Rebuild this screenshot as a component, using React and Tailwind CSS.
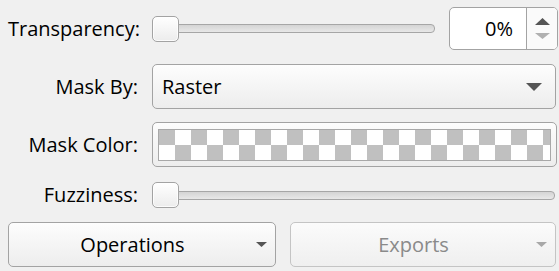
const font = { fontFamily: '"Open Sans", "Noto Sans", Arial, sans-serif' };

function Handle() {
  return (
    <div className="h-[26px] w-[27px] shrink-0 rounded-[5px] border border-[#a3a3a3] bg-linear-to-b from-white to-[#ececec] shadow-[inset_0_0_0_1px_rgba(255,255,255,0.8)]" />
  );
}

function Slider() {
  return (
    <div className="flex h-[26px] flex-1 items-center">
      <Handle />
      <div className="-ml-px h-[9px] flex-1 rounded-r-[4px] border border-[#a6a6a6] bg-linear-to-b from-[#d4d4d4] to-[#e8e8e8]" />
    </div>
  );
}

function Arrow({ w, h, color }) {
  return (
    <svg width={w} height={h} viewBox={`0 0 ${w} ${h}`} className="shrink-0">
      <polygon points={`0,0 ${w},0 ${w / 2},${h}`} fill={color} />
    </svg>
  );
}

function Label({ children }) {
  return <div className="w-[130px] shrink-0 text-right text-[20px] text-black">{children}</div>;
}

export default function App() {
  return (
    <div style={font} className="h-[271px] w-[559px] overflow-hidden bg-[#f0f0f0] pt-[7px] text-black">
      <div className="flex h-[43px] items-center gap-[14px] pl-[8px] pr-[1px]">
        <Label>Transparency:</Label>
        <Slider />
        <div className="flex h-[43px] w-[109px] shrink-0 overflow-hidden rounded-[5px] border border-[#a3a3a3] bg-white">
          <div className="flex flex-1 items-center justify-end pr-[13px] text-[20px]">0%</div>
          <div className="flex w-[31px] flex-col items-center justify-center gap-[8px] border-l border-[#a3a3a3] bg-[#fafafa]">
            <svg width="15" height="7" viewBox="0 0 15 7">
              <polygon points="0,7 15,7 7.5,0" fill="#555" />
            </svg>
            <Arrow w={15} h={6} color="#b0b0b0" />
          </div>
        </div>
      </div>

      <div className="mt-[14px] flex h-[45px] items-center gap-[14px] pl-[8px] pr-[3px]">
        <Label>Mask By:</Label>
        <div className="flex h-[45px] flex-1 items-center rounded-[5px] border border-[#a3a3a3] bg-linear-to-b from-[#fdfdfd] to-[#ededed] pl-[9px] pr-[13px]">
          <span className="flex-1 text-[20px]">Raster</span>
          <Arrow w={16} h={8} color="#555" />
        </div>
      </div>

      <div className="mt-[13px] flex h-[45px] items-center gap-[14px] pl-[8px] pr-[2px]">
        <Label>Mask Color:</Label>
        <div className="flex h-[45px] flex-1 items-center rounded-[5px] border border-[#a3a3a3] bg-linear-to-b from-[#fdfdfd] to-[#ededed] px-[5px]">
          <div className="h-[32px] w-full border border-[#a8a8a8] bg-white bg-[image:repeating-conic-gradient(#fff_0_25%,#c0c0c0_0_50%)] bg-[length:32px_30px]" />
        </div>
      </div>

      <div className="mt-[15px] flex h-[26px] items-center gap-[14px] pl-[8px] pr-[4px]">
        <Label>Fuzziness:</Label>
        <Slider />
      </div>

      <div className="mt-[14px] flex h-[45px] gap-[14px] pl-[8px] pr-[3px]">
        <button className="flex h-[45px] w-[268px] items-center rounded-[5px] border border-[#a3a3a3] bg-linear-to-b from-[#fdfdfd] to-[#ededed] pr-[8px]">
          <span className="flex-1 text-center text-[20px] text-black">Operations</span>
          <Arrow w={11} h={5} color="#555" />
        </button>
        <button className="flex h-[45px] flex-1 items-center rounded-[5px] border border-[#c4c4c4] bg-linear-to-b from-[#fbfbfb] to-[#efefef] pr-[8px]">
          <span className="flex-1 text-center text-[20px] text-[#8a8a8a]">Exports</span>
          <Arrow w={11} h={5} color="#a8a8a8" />
        </button>
      </div>
    </div>
  );
}
